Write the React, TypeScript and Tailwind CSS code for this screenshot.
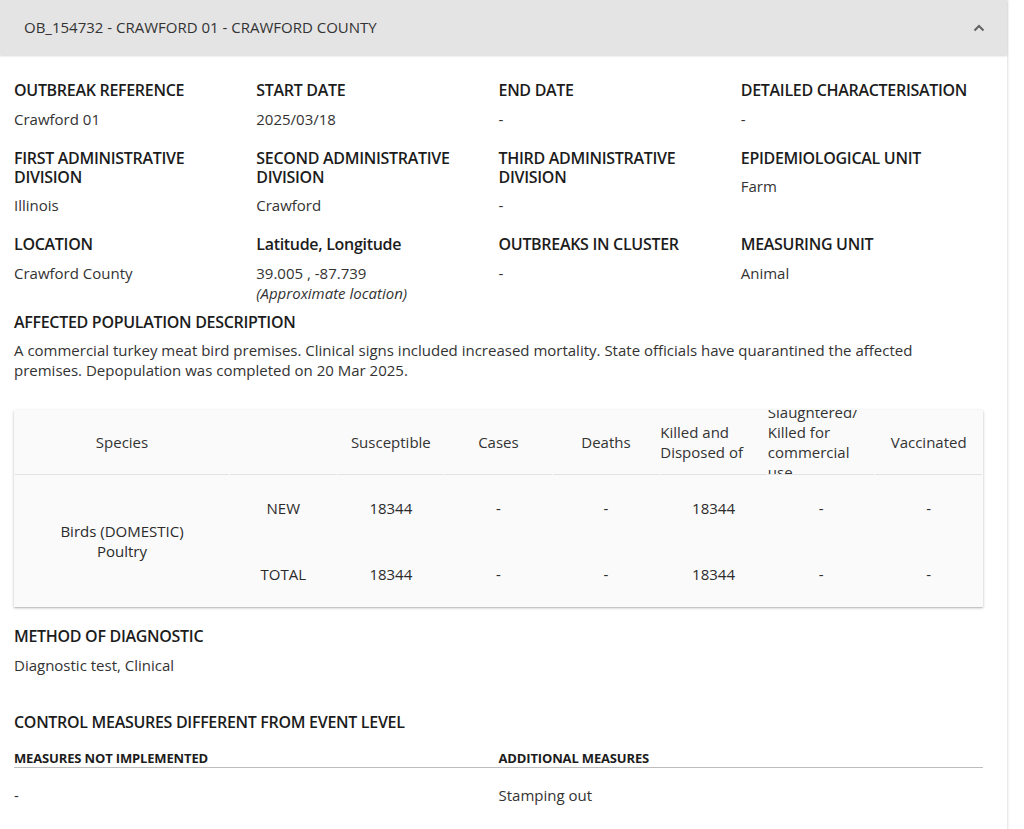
import React from 'react';

interface Field {
  label: string;
  value: React.ReactNode;
  plainLabel?: boolean;
}

const fields: Field[] = [
  { label: 'Outbreak reference', value: 'Crawford 01' },
  { label: 'Start date', value: '2025/03/18' },
  { label: 'End date', value: '-' },
  { label: 'Detailed characterisation', value: '-' },
  { label: 'First administrative division', value: 'Illinois' },
  { label: 'Second administrative division', value: 'Crawford' },
  { label: 'Third administrative division', value: '-' },
  { label: 'Epidemiological unit', value: 'Farm' },
  { label: 'Location', value: 'Crawford County' },
  {
    label: 'Latitude, Longitude',
    plainLabel: true,
    value: (
      <>
        39.005 , -87.739
        <br />
        <span className="italic">(Approximate location)</span>
      </>
    ),
  },
  { label: 'Outbreaks in cluster', value: '-' },
  { label: 'Measuring unit', value: 'Animal' },
];

const rows = [
  { kind: 'NEW', values: ['18344', '-', '-', '18344', '-', '-'] },
  { kind: 'TOTAL', values: ['18344', '-', '-', '18344', '-', '-'] },
];

function ChevronUp() {
  return (
    <svg width="12" height="8" viewBox="0 0 12 8" fill="none">
      <polyline points="1.5,6.5 6,2 10.5,6.5" stroke="#616161" strokeWidth="2" />
    </svg>
  );
}

function Label({ children, plain }: { children: React.ReactNode; plain?: boolean }) {
  return (
    <div
      className={`text-[16px] leading-[19px] font-semibold tracking-[-0.3px] text-[#1c1c1c] ${plain ? '' : 'uppercase'}`}
    >
      {children}
    </div>
  );
}

function Value({ children }: { children: React.ReactNode }) {
  return <div className="mt-[8.5px] text-[15px] leading-[20px] text-[#333]">{children}</div>;
}

function PopulationTable() {
  const th = 'p-0 font-normal text-[15px] leading-[20px] text-[#333] border-b border-[#e3e3e3] align-middle';
  return (
    <div className="mt-[30px] bg-[#fafafa] shadow-[0_1px_3px_rgba(0,0,0,0.22),0_1px_1px_rgba(0,0,0,0.1)]">
      <table className="w-full table-fixed border-separate [border-spacing:1px_0]">
        <colgroup>
          <col className="w-[214px]" />
          <col />
          <col />
          <col />
          <col />
          <col />
          <col />
          <col />
        </colgroup>
        <thead>
          <tr>
            <th className={th}>
              <div className="h-[64px] flex items-center justify-center">Species</div>
            </th>
            <th className={th}>
              <div className="h-[64px]" />
            </th>
            <th className={th}>
              <div className="h-[64px] flex items-center justify-center">Susceptible</div>
            </th>
            <th className={th}>
              <div className="h-[64px] flex items-center justify-center">Cases</div>
            </th>
            <th className={th}>
              <div className="h-[64px] flex items-center justify-center">Deaths</div>
            </th>
            <th className={th}>
              <div className="h-[64px] flex items-center">
                <div className="w-full text-left">
                  Killed and
                  <br />
                  Disposed of
                </div>
              </div>
            </th>
            <th className={th}>
              <div className="h-[64px] flex items-center overflow-hidden">
                <div className="w-full text-left shrink-0">
                  Slaughtered/
                  <br />
                  Killed for
                  <br />
                  commercial
                  <br />
                  use
                </div>
              </div>
            </th>
            <th className={th}>
              <div className="h-[64px] flex items-center justify-center">Vaccinated</div>
            </th>
          </tr>
        </thead>
        <tbody className="text-[15px] leading-[20px] text-[#2b2b2b]">
          {rows.map((row, i) => (
            <tr key={row.kind} className="h-[66px]">
              {i === 0 && (
                <td rowSpan={2} className="text-center align-middle">
                  Birds (DOMESTIC)
                  <br />
                  Poultry
                </td>
              )}
              <td className="text-center font-medium">{row.kind}</td>
              {row.values.map((v, j) => (
                <td key={j} className="text-center">
                  {v}
                </td>
              ))}
            </tr>
          ))}
        </tbody>
      </table>
    </div>
  );
}

export default function App() {
  return (
    <div className="min-h-[829px] bg-white font-['Open_Sans',sans-serif] text-[#333]">
      <div className="w-[1007px] min-h-[829px] bg-white shadow-[1px_0_2px_rgba(0,0,0,0.12)]">
        <div className="h-[55px] bg-[#e4e4e4] flex items-center justify-between pl-6 pr-[22px] shadow-[0_1px_2px_rgba(0,0,0,0.16)]">
          <span className="text-[15px] text-[#333]">OB_154732 - CRAWFORD 01 - CRAWFORD COUNTY</span>
          <ChevronUp />
        </div>

        <div className="pl-[14px] pr-[24px] pt-[26px] pb-8">
          <div className="grid grid-cols-4 gap-y-5">
            {fields.map((f) => (
              <div key={f.label} className="pr-1">
                <Label plain={f.plainLabel}>{f.label}</Label>
                <Value>{f.value}</Value>
              </div>
            ))}
          </div>

          <div className="mt-[10px]">
            <Label>Affected population description</Label>
            <Value>
              A commercial turkey meat bird premises. Clinical signs included increased mortality. State officials have
              quarantined the affected premises. Depopulation was completed on 20 Mar 2025.
            </Value>
          </div>

          <PopulationTable />

          <div className="mt-5">
            <Label>Method of diagnostic</Label>
            <Value>Diagnostic test, Clinical</Value>
          </div>

          <div className="mt-[38px]">
            <Label>Control measures different from event level</Label>
            <div className="mt-[18px] grid grid-cols-2">
              <div className="border-b border-[#bdbdbd] pb-[1px] text-[13px] leading-[16px] font-bold tracking-[-0.15px] text-[#1c1c1c] uppercase">
                Measures not implemented
              </div>
              <div className="border-b border-[#bdbdbd] pb-[1px] text-[13px] leading-[16px] font-bold tracking-[-0.15px] text-[#1c1c1c] uppercase">
                Additional measures
              </div>
              <div className="mt-[17px] text-[15px] leading-[20px] text-[#333]">-</div>
              <div className="mt-[17px] text-[15px] leading-[20px] text-[#333]">Stamping out</div>
            </div>
          </div>
        </div>
      </div>
    </div>
  );
}
